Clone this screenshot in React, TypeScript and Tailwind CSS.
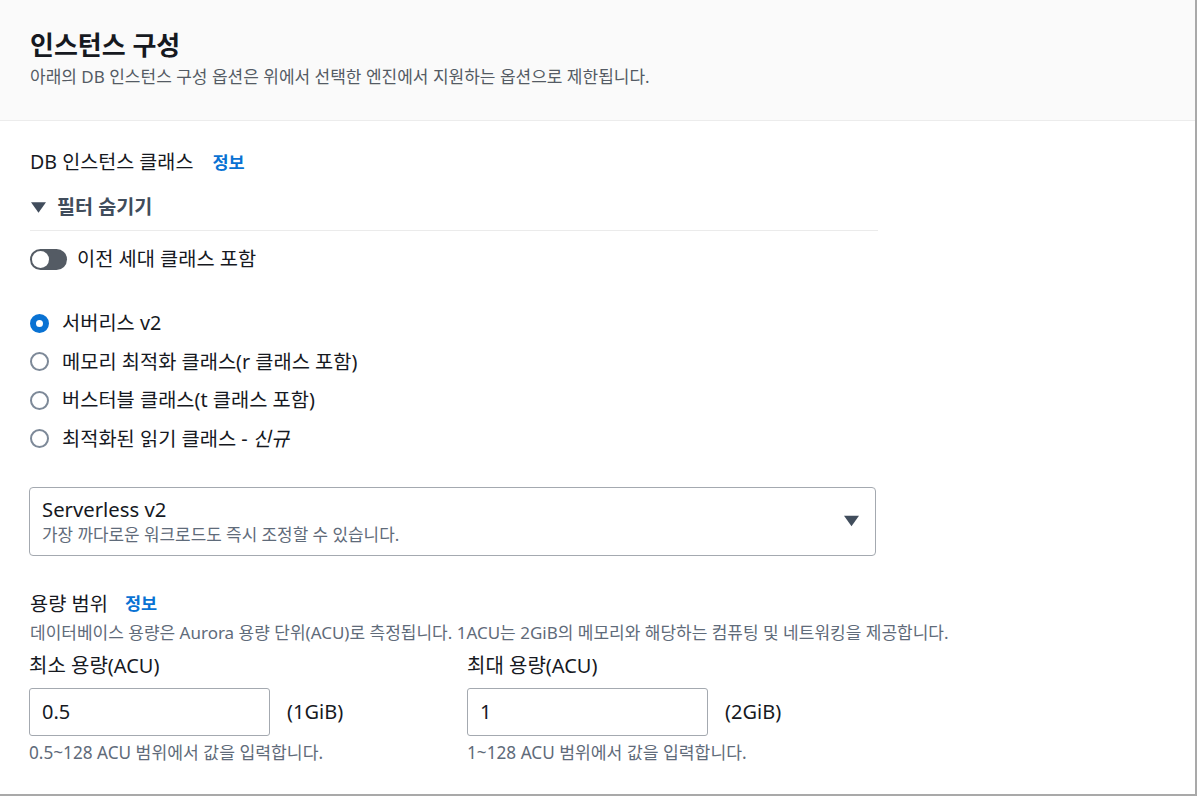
import { useState } from 'react'

const radios = [
  '서버리스 v2',
  '메모리 최적화 클래스(r 클래스 포함)',
  '버스터블 클래스(t 클래스 포함)',
  '최적화된 읽기 클래스 - 신규',
]

function Caret({ className }: { className: string }) {
  return (
    <svg className={className} viewBox="0 0 14 10" fill="currentColor">
      <path d="M0 0h14L7 10z" />
    </svg>
  )
}

function CapacityField({
  label,
  value,
  unit,
  hint,
}: {
  label: string
  value: string
  unit: string
  hint: string
}) {
  return (
    <div className="flex flex-col">
      <div className="h-[24px] text-[20px] leading-[24px] text-[#16191f]">{label}</div>
      <div className="mt-[10px] flex items-center">
        <div className="flex h-[48px] w-[241px] items-center rounded-[3px] border border-[#a4a9b0] px-[12px] text-[20px] text-[#16191f]">
          {value}
        </div>
        <span className="ml-[17px] text-[20px] text-[#16191f]">{unit}</span>
      </div>
      <div className="mt-[6px] text-[17.2px] leading-[22px] text-[#5f6b7a]">{hint}</div>
    </div>
  )
}

export default function App() {
  const [selected, setSelected] = useState(0)

  return (
    <div
      className="h-[797px] w-[1198px] bg-white"
      style={{ fontFamily: '"Noto Sans", "Noto Sans CJK KR", sans-serif' }}
    >
      <div className="h-[796px] w-[1197px] border-r-2 border-b-2 border-[#a9a9a9]">
        {/* 헤더 */}
        <div className="h-[121px] border-b border-[#ececec] bg-[#fafafa] px-[30px] pt-[29px]">
          <h1 className="text-[26px] font-bold leading-[32px] text-[#16191f]">인스턴스 구성</h1>
          <p className="mt-[5px] text-[17px] leading-[22px] text-[#545b64]">
            아래의 DB 인스턴스 구성 옵션은 위에서 선택한 엔진에서 지원하는 옵션으로 제한됩니다.
          </p>
        </div>

        <div className="px-[30px] pt-[29px]">
          <div className="flex h-[24px] items-center text-[19.6px] text-[#16191f]">
            DB 인스턴스 클래스
            <span className="ml-[19px] text-[17.5px] font-bold text-[#0972d3]">정보</span>
          </div>

          <div className="mt-[21px] flex h-[24px] items-center text-[19.6px] font-bold text-[#414d5c]">
            <Caret className="ml-[1px] h-[11px] w-[15px] text-[#414d5c]" />
            <span className="ml-[11px]">필터 숨기기</span>
          </div>

          <div className="mt-[11px] w-[848px] border-t border-[#ebebeb]" />

          <div className="mt-[16px] flex h-[24px] items-center text-[19.8px] text-[#16191f]">
            <div className="flex h-[21px] w-[37px] items-center rounded-full bg-[#545b64] px-[2px]">
              <div className="h-[17px] w-[17px] rounded-full bg-white" />
            </div>
            <span className="ml-[10px]">이전 세대 클래스 포함</span>
          </div>

          <div className="mt-[40px] flex flex-col gap-[14.5px]">
            {radios.map((r, i) => (
              <button
                key={r}
                onClick={() => setSelected(i)}
                className="flex h-[24px] items-center text-left text-[19.8px] text-[#16191f]"
              >
                {selected === i ? (
                  <span className="h-[19px] w-[19px] rounded-full border-[6px] border-[#0972d3] bg-white" />
                ) : (
                  <span className="h-[19px] w-[19px] rounded-full border-2 border-[#7d8998] bg-white" />
                )}
                <span className="ml-[13px]">
                  {i === 3 ? (
                    <>
                      최적화된 읽기 클래스 - <i>신규</i>
                    </>
                  ) : (
                    r
                  )}
                </span>
              </button>
            ))}
          </div>

          <div className="ml-[-1px] mt-[36px] flex h-[69px] w-[847px] items-center justify-between rounded-[4px] border border-[#a4a9b0] pl-[12px] pr-[16px]">
            <div className="flex flex-col">
              <span className="text-[20.3px] leading-[26px] text-[#16191f]">Serverless v2</span>
              <span className="mt-[2px] text-[16.9px] leading-[22px] text-[#5f6b7a]">
                가장 까다로운 워크로드도 즉시 조정할 수 있습니다.
              </span>
            </div>
            <Caret className="h-[12px] w-[15px] text-[#414d5c]" />
          </div>

          <div className="mt-[36px] flex h-[24px] items-center text-[19.8px] text-[#16191f]">
            용량 범위
            <span className="ml-[17px] text-[17.5px] font-bold text-[#0972d3]">정보</span>
          </div>
          <p className="mt-[6px] whitespace-nowrap text-[17px] leading-[22px] text-[#5f6b7a]">
            데이터베이스 용량은 Aurora 용량 단위(ACU)로 측정됩니다. 1ACU는 2GiB의 메모리와 해당하는 컴퓨팅 및 네트워킹을 제공합니다.
          </p>

          <div className="ml-[-1px] mt-[10px] grid grid-cols-[438px_438px]">
            <CapacityField
              label="최소 용량(ACU)"
              value="0.5"
              unit="(1GiB)"
              hint="0.5~128 ACU 범위에서 값을 입력합니다."
            />
            <CapacityField
              label="최대 용량(ACU)"
              value="1"
              unit="(2GiB)"
              hint="1~128 ACU 범위에서 값을 입력합니다."
            />
          </div>
        </div>
      </div>
    </div>
  )
}
